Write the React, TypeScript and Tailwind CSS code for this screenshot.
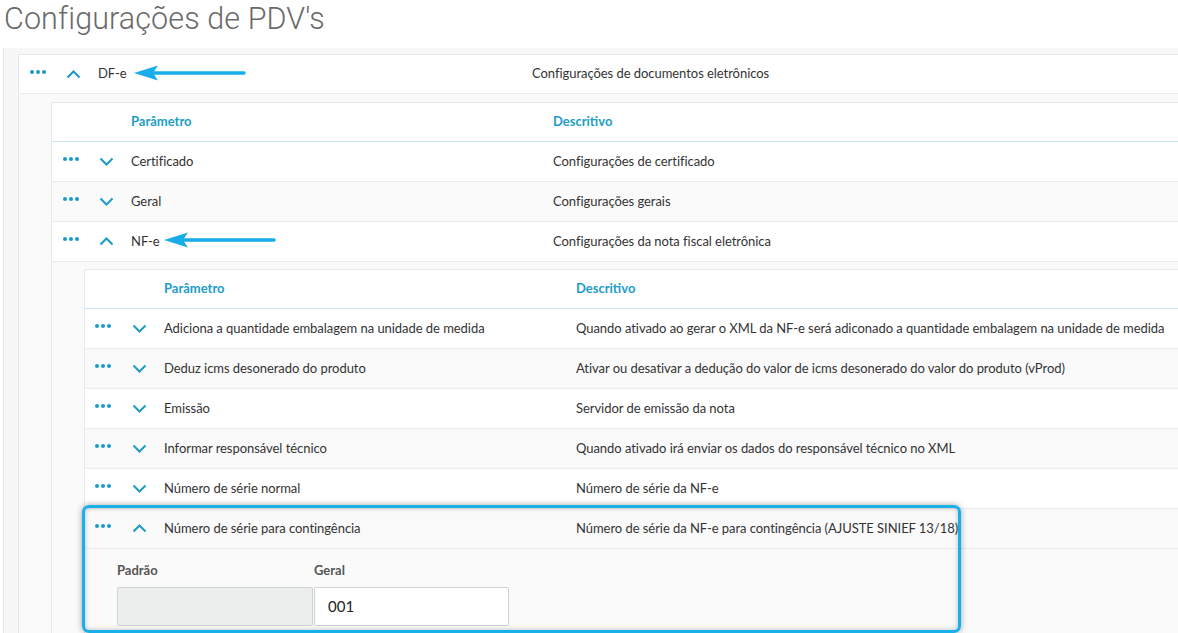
import React from 'react'

type Level = { text: string; h: string }

const LEVELS: Record<number, Level> = {
  1: { text: 'w-[434px]', h: 'h-[39px]' },
  2: { text: 'w-[422px]', h: 'h-[40px]' },
  3: { text: 'w-[412px]', h: 'h-[40px]' },
}

const Dots = () => (
  <svg width="16" height="4" viewBox="0 0 16 4" className="block">
    <circle cx="2" cy="2" r="2" fill="#1a9bc6" />
    <circle cx="8" cy="2" r="2" fill="#1a9bc6" />
    <circle cx="14" cy="2" r="2" fill="#1a9bc6" />
  </svg>
)

const Chevron = ({ open }: { open: boolean }) => (
  <svg width="15" height="9" viewBox="0 0 15 9" className="block">
    <polyline
      points={open ? '1.5,7.5 7.5,1.5 13.5,7.5' : '1.5,1.5 7.5,7.5 13.5,1.5'}
      fill="none"
      stroke="#1a9bc6"
      strokeWidth="2"
    />
  </svg>
)

function Header({ level }: { level: number }) {
  const l = LEVELS[level]
  return (
    <div className="flex h-[39px] items-center border-b border-[#c9e6f0] text-[13px] font-bold text-[#1d9dc8]">
      <div className="w-[79px]" />
      <div className={l.text}>Parâmetro</div>
      <div>Descritivo</div>
    </div>
  )
}

function Row({ level, name, desc, open = false, shaded = false }: { level: number; name: string; desc: string; open?: boolean; shaded?: boolean }) {
  const l = LEVELS[level]
  return (
    <div className={`flex ${l.h} items-center border-b border-[#ebebeb] text-[13px] tracking-[-0.05px] text-[#333] ${shaded ? 'bg-[#fafafa]' : 'bg-white'}`}>
      <div className={`w-[47px] pb-[5px] ${level === 3 ? 'pl-[10px]' : 'pl-[11px]'}`}><Dots /></div>
      <div className="w-[32px]"><Chevron open={open} /></div>
      <div className={`${l.text} whitespace-nowrap`}>{name}</div>
      <div className="whitespace-nowrap">{desc}</div>
    </div>
  )
}

const Arrow = ({ className }: { className: string }) => (
  <svg width="112" height="18" viewBox="0 0 112 18" className={`absolute ${className}`}>
    <line x1="16" y1="9" x2="110" y2="9" stroke="#18ade8" strokeWidth="3.5" strokeLinecap="round" />
    <polygon points="0,9 24,1.5 19,9 24,16.5" fill="#18ade8" />
  </svg>
)

export default function App() {
  return (
    <div className="relative h-[633px] w-[1178px] overflow-hidden bg-white font-['Lato','Liberation_Sans',sans-serif]">
      <div className="h-[48px] pl-[4px] font-['Roboto','Liberation_Sans',sans-serif] text-[30.5px] font-light leading-[38px] tracking-[0.1px] text-[#6a6a6a]">
        Configurações de PDV's
      </div>
      <div className="ml-[3px] h-full border-l border-[#e6e6e6] bg-[#f7f7f7] pl-[14px] pt-[6px]">
        <div className="h-full border-l border-t border-[#e6e6e6] bg-white">
          <Row level={1} name="DF-e" desc="Configurações de documentos eletrônicos" open />
          <div className="h-full bg-[#fafafa] pl-[32px] pt-[8px]">
            <div className="h-full border-l border-t border-[#e8e8e8] bg-white">
              <Header level={2} />
              <Row level={2} name="Certificado" desc="Configurações de certificado" />
              <Row level={2} name="Geral" desc="Configurações gerais" shaded />
              <Row level={2} name="NF-e" desc="Configurações da nota fiscal eletrônica" open />
              <div className="h-full bg-[#fafafa] pl-[32px] pt-[7px]">
                <div className="h-full border-l border-t border-[#e8e8e8] bg-white">
                  <Header level={3} />
                  <Row level={3} name="Adiciona a quantidade embalagem na unidade de medida" desc="Quando ativado ao gerar o XML da NF-e será adiconado a quantidade embalagem na unidade de medida" />
                  <Row level={3} name="Deduz icms desonerado do produto" desc="Ativar ou desativar a dedução do valor de icms desonerado do valor do produto (vProd)" shaded />
                  <Row level={3} name="Emissão" desc="Servidor de emissão da nota" />
                  <Row level={3} name="Informar responsável técnico" desc="Quando ativado irá enviar os dados do responsável técnico no XML" shaded />
                  <Row level={3} name="Número de série normal" desc="Número de série da NF-e" />
                  <Row level={3} name="Número de série para contingência" desc="Número de série da NF-e para contingência (AJUSTE SINIEF 13/18)" open shaded />
                  <div className="h-full bg-[#fafafa] pl-[32px] pt-[12px]">
                    <div className="flex gap-[1px]">
                      <div className="w-[196px]">
                        <div className="mb-[6px] text-[13px] font-bold text-[#555]">Padrão</div>
                        <div className="h-[39px] rounded-[2px] border border-[#cfd2d2] bg-[#eceeee]" />
                      </div>
                      <div className="w-[195px]">
                        <div className="mb-[6px] text-[13px] font-bold text-[#555]">Geral</div>
                        <div className="flex h-[39px] items-center rounded-[2px] border border-[#cfd2d2] bg-white pl-[13px] text-[15px] text-[#222]">001</div>
                      </div>
                    </div>
                  </div>
                </div>
              </div>
            </div>
          </div>
        </div>
      </div>
      <Arrow className="left-[134px] top-[64px]" />
      <Arrow className="left-[164px] top-[231px]" />
      <div className="absolute left-[82px] top-[505px] h-[128px] w-[879px] rounded-[7px] border-[3px] border-[#18b0e9] shadow-[0_0_6px_rgba(0,0,0,0.35),inset_0_0_5px_rgba(0,0,0,0.25)]" />
    </div>
  )
}
